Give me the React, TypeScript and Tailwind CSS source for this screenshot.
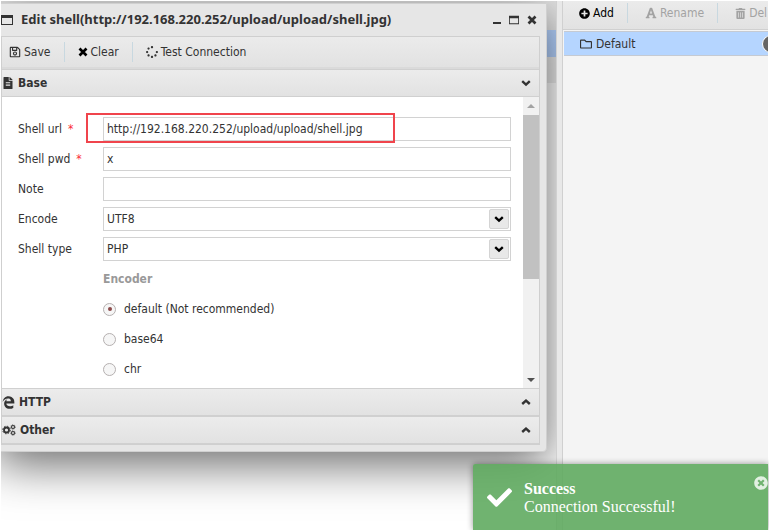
import React from 'react';
import {
  FaCheck,
  FaEdgeLegacy,
  FaFileAlt,
  FaFont,
  FaPlusCircle,
  FaRegFolder,
  FaRegSave,
  FaSpinner,
  FaTimesCircle,
  FaTrashAlt,
} from 'react-icons/fa';

const encoders = [
  { value: 'default', label: 'default (Not recommended)' },
  { value: 'base64', label: 'base64' },
  { value: 'chr', label: 'chr' },
];

function WindowIcon({ className }: { className?: string }) {
  return (
    <svg viewBox="0 0 12 12" className={className} aria-hidden="true">
      <path d="M0 1h12v10H0z M1 4v6h10V4z" fill="currentColor" fillRule="evenodd" />
    </svg>
  );
}

function CrossIcon({ className }: { className?: string }) {
  return (
    <svg viewBox="0 0 10 10" className={className} aria-hidden="true">
      <path d="M1.5 1.5l7 7M8.5 1.5l-7 7" stroke="currentColor" strokeWidth="2.7" />
    </svg>
  );
}

function Chevron({ up }: { up?: boolean }) {
  return (
    <svg viewBox="0 0 10 10" className="size-2.5" aria-hidden="true">
      <path
        d={up ? 'M1.2 7L5 3.6L8.8 7' : 'M1.2 3.2L5 6.6L8.8 3.2'}
        fill="none"
        stroke="currentColor"
        strokeWidth="2.4"
      />
    </svg>
  );
}

function CogsIcon() {
  return (
    <svg viewBox="0 0 14 12" className="h-3 w-3.5" fill="none" stroke="currentColor" aria-hidden="true">
      <circle cx="4.5" cy="6" r="2.5" strokeWidth="1.8" />
      <circle cx="4.5" cy="6" r="3.8" strokeWidth="1" strokeDasharray="1.5 1.48" />
      <circle cx="11" cy="3" r="1.5" strokeWidth="1.1" />
      <circle cx="11" cy="3" r="2.3" strokeWidth="0.7" strokeDasharray="0.9 0.9" />
      <circle cx="11" cy="9" r="1.5" strokeWidth="1.1" />
      <circle cx="11" cy="9" r="2.3" strokeWidth="0.7" strokeDasharray="0.9 0.9" />
    </svg>
  );
}

function Row({ label, htmlFor, required, children }: {
  label: string;
  htmlFor: string;
  required?: boolean;
  children: React.ReactNode;
}) {
  return (
    <div className="flex h-6 items-center">
      <label htmlFor={htmlFor} className="w-[85px] shrink-0">
        {label}
        {required && <span className="ml-1.5 text-red-500">*</span>}
      </label>
      <div className="relative h-6 flex-1">{children}</div>
    </div>
  );
}

function SelectBox({ id, value }: { id: string; value: string }) {
  return (
    <>
      <select
        id={id}
        defaultValue={value}
        className="h-6 w-full appearance-none border border-[#d2d2d2] bg-white px-[3px]"
      >
        <option>{value}</option>
      </select>
      <span className="pointer-events-none absolute inset-y-0.5 right-0.5 flex w-5 items-center justify-center rounded-xs border border-[#d4d4d4] bg-[#e8e8e8] text-black">
        <Chevron />
      </span>
    </>
  );
}

function SectionHeader({ icon, title, open }: { icon: React.ReactNode; title: string; open?: boolean }) {
  return (
    <button className="flex h-7 w-full items-center gap-1 border-y border-[#d0d0d0] bg-linear-to-b from-[#ececec] to-[#e2e2e2] pr-2 text-left font-bold">
      {icon}
      <span className="flex-1">{title}</span>
      <Chevron up={!open} />
    </button>
  );
}

const inputClass = 'h-6 w-full border border-[#d2d2d2] bg-white px-[3px] outline-none';

export default function App() {
  const [encoder, setEncoder] = React.useState('default');

  return (
    <div className="relative flex h-screen overflow-hidden bg-white px-px pt-px font-['DejaVu_Sans_Condensed','Noto_Sans',sans-serif] text-xs text-[#333]">
      <main className="relative flex-1 overflow-hidden bg-white">
        <div className="h-[29px] bg-[#e4e4e4]" />
        <div className="h-[27px] bg-[#b5d3ff]" />
        <div className="h-[26px] bg-[#ededed]" />

        <section className="absolute top-0.5 right-[9px] -left-[5px] rounded-br-sm border border-[#d0d0d0] bg-[#e6e6e6] pr-1.5 pb-1.5 pl-1 shadow-[0_12px_48px_rgba(0,0,0,0.6)]">
          <header className="flex h-8 items-center gap-2 pr-[3px]">
            <WindowIcon className="size-3" />
            <h1 className="flex-1 font-['Noto_Sans',sans-serif] text-[13px] font-bold">Edit shell(http://192.168.220.252/upload/upload/shell.jpg)</h1>
            <button aria-label="Minimize" className="flex h-3 w-2 items-end pb-0.5">
              <span className="h-0.5 w-2 bg-[#333]" />
            </button>
            <button aria-label="Maximize"><WindowIcon className="size-2.5" /></button>
            <button aria-label="Close"><CrossIcon className="size-2.5" /></button>
          </header>

          <div className="border border-[#cfcfcf]">
            <div className="flex h-[30px] items-center bg-linear-to-b from-[#ebebeb] to-[#e2e2e2] pl-[7px]">
              <button className="flex items-center gap-[3px]"><FaRegSave size={12} />Save</button>
              <span className="mx-[13px] h-5 w-px bg-[#c8d8e0]" />
              <button className="flex items-center gap-[3px]"><CrossIcon className="size-2.5 text-black" />Clear</button>
              <span className="mx-[13px] h-5 w-px bg-[#c8d8e0]" />
              <button className="flex items-center gap-[3px]"><FaSpinner size={12} />Test Connection</button>
            </div>
            <div className="h-0.5 bg-[#dadada]" />

            <SectionHeader icon={<FaFileAlt size={12} />} title="Base" open />
            <div className="flex bg-white">
              <form className="flex flex-1 flex-col gap-1.5 pt-5 pr-3 pb-[7px] pl-4">
                <Row label="Shell url" htmlFor="url" required>
                  <input id="url" defaultValue="http://192.168.220.252/upload/upload/shell.jpg" className={inputClass} />
                  <span className="pointer-events-none absolute -top-1 -bottom-0.5 -left-[17px] w-[309px] border-2 border-[#f0444c]" />
                </Row>
                <Row label="Shell pwd" htmlFor="pwd" required>
                  <input id="pwd" defaultValue="x" className={inputClass} />
                </Row>
                <Row label="Note" htmlFor="note">
                  <input id="note" className={inputClass} />
                </Row>
                <Row label="Encode" htmlFor="encode"><SelectBox id="encode" value="UTF8" /></Row>
                <Row label="Shell type" htmlFor="type"><SelectBox id="type" value="PHP" /></Row>
                <fieldset className="flex flex-col gap-1.5 pl-[85px]">
                  <legend className="mb-1.5 h-6 font-bold leading-6 text-[#999]">Encoder</legend>
                  {encoders.map((item) => (
                    <label key={item.value} className="flex h-6 items-center gap-2">
                      <input
                        type="radio"
                        name="encoder"
                        checked={encoder === item.value}
                        onChange={() => setEncoder(item.value)}
                        className="grid size-[13px] appearance-none place-items-center rounded-full border border-[#b5b0b0] bg-[#f6f6f6] checked:before:size-1 checked:before:rounded-full checked:before:bg-[#8c4a4a]"
                      />
                      {item.label}
                    </label>
                  ))}
                </fieldset>
              </form>
              <div className="flex w-4 flex-col items-center bg-[#f1f1f1]">
                <span className="my-[7px] border-x-4 border-b-4 border-x-transparent border-b-[#a3a3a3]" />
                <span className="h-[164px] w-full bg-[#c1c1c1]" />
                <span className="mt-auto mb-1.5 border-x-4 border-t-4 border-x-transparent border-t-[#505050]" />
              </div>
            </div>
            <SectionHeader icon={<FaEdgeLegacy size={13} />} title="HTTP" />
            <SectionHeader icon={<CogsIcon />} title="Other" />
          </div>
        </section>
      </main>

      <div className="w-[7px] border-x border-[#d0d0d0] bg-[#e8e8e8]" />

      <aside className="w-[205px] shrink-0 overflow-hidden bg-[#f4f4f4]">
        <div className="flex h-[29px] items-center border-b border-[#d0d0d0] bg-linear-to-b from-[#ebebeb] to-[#e2e2e2] pb-1 pl-4 whitespace-nowrap">
          <button className="flex items-center gap-[3px] text-black"><FaPlusCircle size={11} />Add</button>
          <span className="mr-[17px] ml-[13px] h-5 w-px bg-[#c8d8e0]" />
          <button disabled className="flex items-center gap-[3px] text-[#a3a3a3]"><FaFont size={12} />Rename</button>
          <span className="mr-[17px] ml-[13px] h-5 w-px bg-[#c8d8e0]" />
          <button disabled className="flex items-center gap-[3px] text-[#a3a3a3]"><FaTrashAlt size={11} />Del</button>
        </div>
        <div className="relative mt-px ml-px flex h-[25px] items-center gap-1 border-y border-[#c5cad2] bg-[#b5d5ff] pl-4">
          <FaRegFolder size={12} />
          Default
          <span className="absolute -right-3 size-[18px] rounded-full border border-white bg-[#666]" />
        </div>
      </aside>

      <div role="status" className="absolute right-px bottom-0 flex h-[66px] w-[295px] items-center rounded-tl-xs bg-[#5ca95c]/88 pl-3.5 text-white shadow-[0_0_6px_rgba(0,0,0,0.4)]">
        <FaCheck size={25} />
        <div className="ml-3 pt-0.5 font-['Liberation_Serif',serif] text-base leading-[18px]">
          <p className="font-bold">Success</p>
          <p>Connection Successful!</p>
        </div>
        <button aria-label="Dismiss" className="absolute top-3 right-0 text-white/80"><FaTimesCircle size={14} /></button>
      </div>
    </div>
  );
}
